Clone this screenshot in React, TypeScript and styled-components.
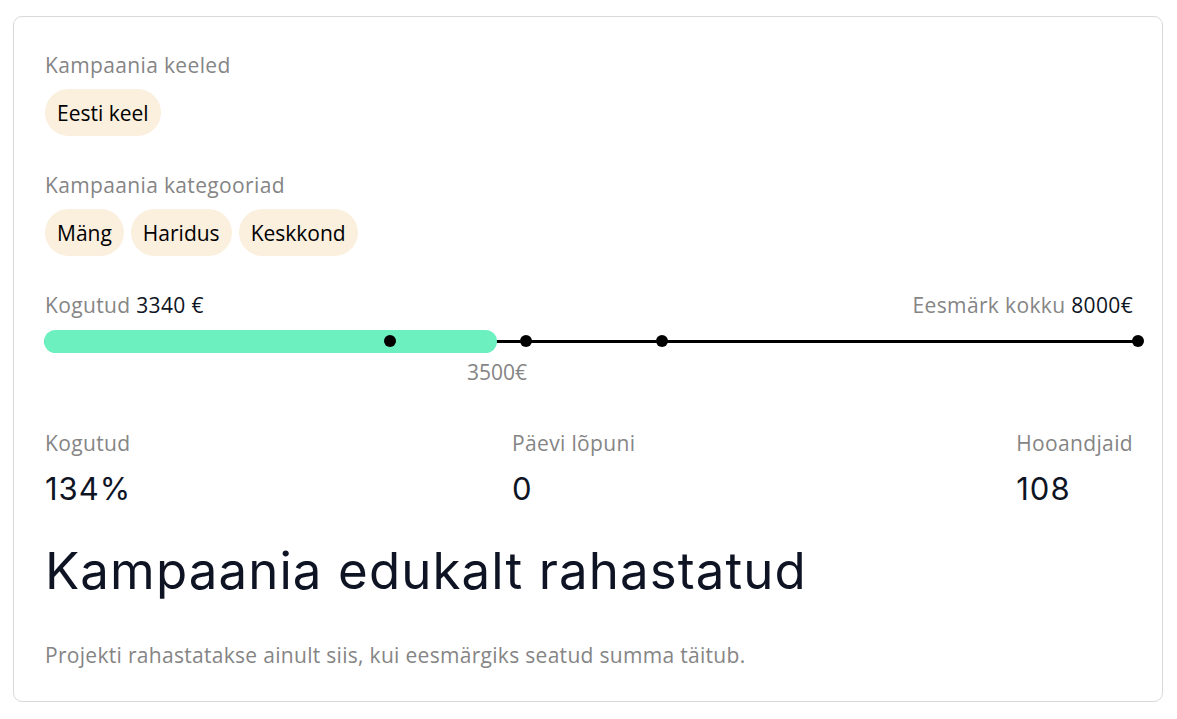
import styled, { createGlobalStyle } from "styled-components";

const GlobalStyle = createGlobalStyle`
  html, body {
    margin: 0;
    padding: 0;
    background: #ffffff;
  }
  body {
    font-family: "Open Sans", "Liberation Sans", sans-serif;
  }
`;

const Page = styled.div`
  padding: 16px 14px 16px 13px;
`;

const Card = styled.section`
  border: 1px solid #d9d9d9;
  border-radius: 9px;
  padding: 34px 29px 32px 31px;
  display: flex;
  flex-direction: column;
`;

const Label = styled.div`
  font-size: 21px;
  line-height: 28px;
  letter-spacing: 0.35px;
  color: #858585;
`;

const ChipRow = styled.div`
  display: flex;
  gap: 7px;
  margin-top: 10px;
  margin-bottom: 35px;
`;

const Chip = styled.span`
  display: inline-flex;
  align-items: center;
  height: 47px;
  padding: 0 12px;
  border-radius: 24px;
  background: #fbefde;
  color: #000;
  font-size: 21px;
`;

const AmountRow = styled.div`
  display: flex;
  justify-content: space-between;
`;

const Strong = styled.span`
  color: #0e1424;
`;

const Track = styled.div`
  position: relative;
  height: 23px;
  margin: 11px -5px 0 -1px;
`;

const Line = styled.div`
  position: absolute;
  left: 0;
  right: 0;
  top: 10px;
  height: 3px;
  background: #000;
`;

const Fill = styled.div`
  position: absolute;
  left: 0;
  top: 0;
  height: 23px;
  border-radius: 12px;
  background: #6cf0bf;
`;

const Dot = styled.span`
  position: absolute;
  top: 5px;
  width: 12px;
  height: 12px;
  margin-left: -6px;
  border-radius: 50%;
  background: #000;
`;

const MarkerLabel = styled.span`
  position: absolute;
  top: 28px;
  transform: translateX(-50%);
  font-size: 21px;
  line-height: 28px;
  color: #858585;
`;

const Stats = styled.div`
  display: flex;
  justify-content: space-between;
  margin-top: 76px;
`;

const Stat = styled.div`
  display: flex;
  flex-direction: column;
  gap: 14px;
`;

const Value = styled.div`
  font-family: "Inter", "Liberation Sans", sans-serif;
  font-size: 31px;
  line-height: 36px;
  color: #0e1424;
  letter-spacing: 1px;
`;

const Heading = styled.h2`
  margin: 34px 0 0;
  font-family: "Inter", "Liberation Sans", sans-serif;
  font-weight: 400;
  font-size: 51px;
  line-height: 60px;
  letter-spacing: 1.1px;
  color: #0e1424;
`;

const Note = styled.p`
  margin: 40px 0 0;
  font-size: 21px;
  line-height: 28px;
  letter-spacing: 0.3px;
  color: #858585;
`;

const fill = 41.4;
const dots = [31.6, 44.06, 56.5, 100];

export default function App() {
  return (
    <>
      <GlobalStyle />
      <Page>
        <Card>
          <Label>Kampaania keeled</Label>
          <ChipRow>
            <Chip>Eesti keel</Chip>
          </ChipRow>
          <Label>Kampaania kategooriad</Label>
          <ChipRow>
            <Chip>Mäng</Chip>
            <Chip>Haridus</Chip>
            <Chip>Keskkond</Chip>
          </ChipRow>
          <AmountRow>
            <Label>
              Kogutud <Strong>3340 €</Strong>
            </Label>
            <Label>
              Eesmärk kokku <Strong>8000€</Strong>
            </Label>
          </AmountRow>
          <Track>
            <Line />
            <Fill style={{ width: `${fill}%` }} />
            {dots.map((d) => (
              <Dot key={d} style={{ left: `${d}%` }} />
            ))}
            <MarkerLabel style={{ left: `${fill}%` }}>3500€</MarkerLabel>
          </Track>
          <Stats>
            <Stat>
              <Label>Kogutud</Label>
              <Value>134%</Value>
            </Stat>
            <Stat>
              <Label>Päevi lõpuni</Label>
              <Value>0</Value>
            </Stat>
            <Stat>
              <Label>Hooandjaid</Label>
              <Value>108</Value>
            </Stat>
          </Stats>
          <Heading>Kampaania edukalt rahastatud</Heading>
          <Note>
            Projekti rahastatakse ainult siis, kui eesmärgiks seatud summa
            täitub.
          </Note>
        </Card>
      </Page>
    </>
  );
}
